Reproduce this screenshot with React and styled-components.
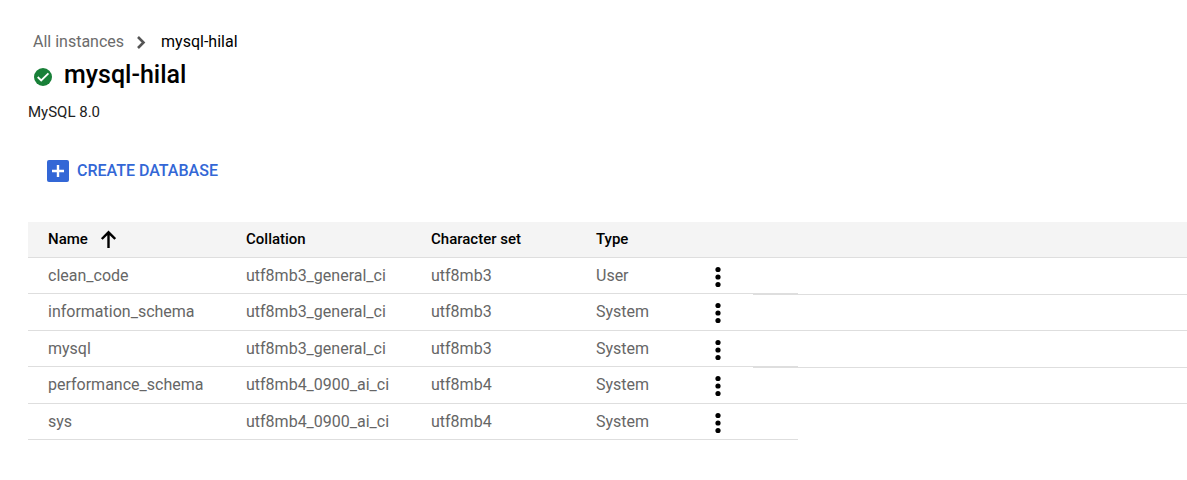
import React from "react";
import styled, { createGlobalStyle } from "styled-components";

const GlobalStyle = createGlobalStyle`
  *, *::before, *::after { box-sizing: border-box; }
  body {
    margin: 0;
    background: #fff;
    color: #000;
    font-family: Roboto, "Liberation Sans", sans-serif;
    font-size: 16px;
    line-height: 20px;
  }
`;

const Page = styled.main`
  padding: 32px 0 40px 28px;
`;

const Breadcrumb = styled.nav`
  display: flex;
  align-items: center;
  padding-left: 5px;
`;

const CrumbLink = styled.a`
  color: #6b6b6b;
  text-decoration: none;
`;

const Chevron = styled.svg`
  width: 12px;
  height: 14px;
  margin: 0 14px 0 11px;
`;

const TitleRow = styled.header`
  display: flex;
  align-items: center;
  gap: 12px;
  margin-top: 8px;
  padding-left: 6px;
`;

const StatusIcon = styled.svg`
  width: 18px;
  height: 18px;
  margin-top: 4px;
`;

const Title = styled.h1`
  margin: 0;
  font-size: 25px;
  font-weight: 500;
  line-height: 30px;
`;

const Version = styled.p`
  margin: 12px 0 0;
  color: #212121;
  font-size: 15px;
`;

const CreateButton = styled.button`
  display: flex;
  align-items: center;
  gap: 7px;
  margin: 37px 0 0 18px;
  padding: 0;
  border: 0;
  background: none;
  color: #3367d6;
  font: 500 16px/24px Roboto, "Liberation Sans", sans-serif;
  cursor: pointer;
`;

const PlusIcon = styled.svg`
  width: 24px;
  height: 24px;
`;

const Table = styled.table`
  width: 100%;
  margin-top: 39px;
  border-collapse: separate;
  border-spacing: 0;
  table-layout: fixed;
`;

const Col = styled.col`
  width: ${({ $width }) => ($width ? `${$width}px` : "auto")};
`;

const HeadCell = styled.th`
  height: 36px;
  padding: 0 0 2px 20px;
  border-bottom: 1px solid #dedede;
  background: #f4f4f4;
  font-size: 15px;
  font-weight: 500;
  text-align: left;
  white-space: nowrap;
`;

const SortLabel = styled.span`
  display: flex;
  align-items: center;
  gap: 12px;
`;

const SortArrow = styled.svg`
  width: 16px;
  height: 18px;
`;

const Row = styled.tr`
  height: 36px;
  &:nth-child(even) { height: 37px; }
`;

const Cell = styled.td`
  padding: 0 0 0 20px;
  border-bottom: 1px solid #dedede;
  color: #666;
  white-space: nowrap;
`;

const MenuCell = styled(Cell)`
  padding: 0 0 0 15px;
`;

const SeamCell = styled(Cell)`
  padding: 0;
  tr:nth-child(even) > & { border-top: 1px solid #dedede; }
`;

const FillerCell = styled(SeamCell)`
  tr:nth-child(odd) > & { border-bottom: 0; }
`;

const MenuButton = styled.button`
  display: block;
  width: 6px;
  height: 22px;
  margin-top: 2px;
  padding: 0;
  border: 0;
  background: none;
  cursor: pointer;
`;

const Dots = styled.svg`
  display: block;
  width: 6px;
  height: 22px;
`;

const databases = [
  ["clean_code", "utf8mb3_general_ci", "utf8mb3", "User"],
  ["information_schema", "utf8mb3_general_ci", "utf8mb3", "System"],
  ["mysql", "utf8mb3_general_ci", "utf8mb3", "System"],
  ["performance_schema", "utf8mb4_0900_ai_ci", "utf8mb4", "System"],
  ["sys", "utf8mb4_0900_ai_ci", "utf8mb4", "System"],
];

export default function App() {
  return (
    <>
      <GlobalStyle />
      <Page>
        <Breadcrumb aria-label="Breadcrumb">
          <CrumbLink href="#instances">All instances</CrumbLink>
          <Chevron viewBox="0 0 12 14" aria-hidden="true">
            <path d="M3 2l5.500 5.500L3 13" fill="none" stroke="#555" strokeWidth="2.6" />
          </Chevron>
          <span aria-current="page">mysql-hilal</span>
        </Breadcrumb>
        <TitleRow>
          <StatusIcon viewBox="0 0 18 18" role="img" aria-label="Running">
            <circle cx="9" cy="9" r="9" fill="#188038" />
            <path d="M3.700 9l3.500 3.500 7.200-7.200" fill="none" stroke="#fff" strokeWidth="1.8" />
          </StatusIcon>
          <Title>mysql-hilal</Title>
        </TitleRow>
        <Version>MySQL 8.0</Version>
        <CreateButton type="button">
          <PlusIcon viewBox="0 0 24 24" aria-hidden="true">
            <rect x="1" y="1" width="22" height="22" rx="2" fill="#3367d6" />
            <path d="M12 6v12M6 12h12" stroke="#fff" strokeWidth="2.4" />
          </PlusIcon>
          CREATE DATABASE
        </CreateButton>
        <Table>
          <colgroup>
            <Col $width={198} />
            <Col $width={185} />
            <Col $width={165} />
            <Col $width={124} />
            <Col $width={53} />
            <Col $width={45} />
            <Col />
          </colgroup>
          <thead>
            <tr>
              <HeadCell scope="col" aria-sort="ascending">
                <SortLabel>
                  Name
                  <SortArrow viewBox="0 0 16 18" aria-hidden="true">
                    <path d="M8.500 18V3M1.800 9L8.500 2.300l6.700 6.700" fill="none" stroke="#000" strokeWidth="2.400" />
                  </SortArrow>
                </SortLabel>
              </HeadCell>
              <HeadCell scope="col">Collation</HeadCell>
              <HeadCell scope="col">Character set</HeadCell>
              <HeadCell scope="col">Type</HeadCell>
              <HeadCell as="td" colSpan={3} />
            </tr>
          </thead>
          <tbody>
            {databases.map(([name, ...details]) => (
              <Row key={name}>
                <Cell>{name}</Cell>
                {details.map((value) => (
                  <Cell key={value}>{value}</Cell>
                ))}
                <MenuCell>
                  <MenuButton type="button" aria-label={`Actions for ${name}`}>
                    <Dots viewBox="0 0 6 22" aria-hidden="true">
                      <circle cx="3" cy="3.500" r="2.600" />
                      <circle cx="3" cy="11" r="2.600" />
                      <circle cx="3" cy="18.500" r="2.600" />
                    </Dots>
                  </MenuButton>
                </MenuCell>
                <SeamCell />
                <FillerCell />
              </Row>
            ))}
          </tbody>
        </Table>
      </Page>
    </>
  );
}
